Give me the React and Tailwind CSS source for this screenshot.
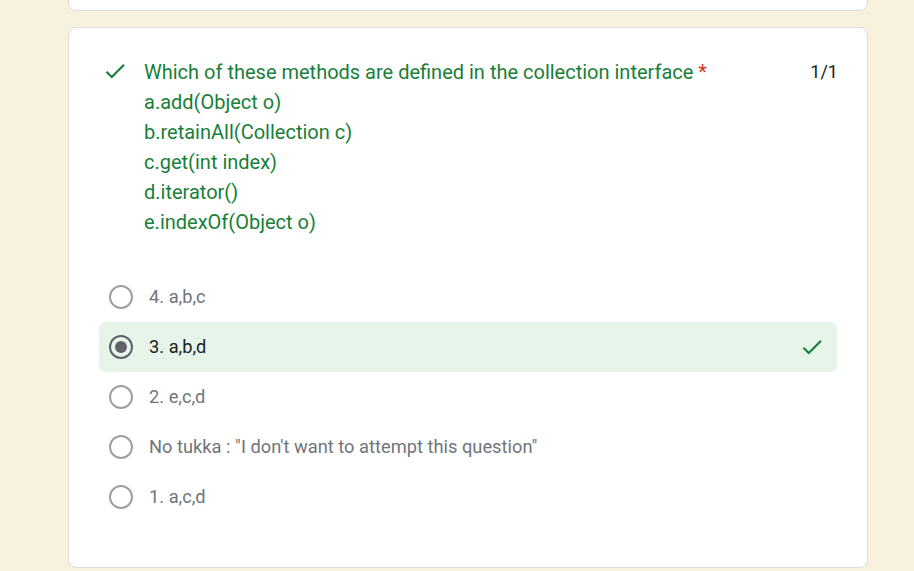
import React from "react";

function Check({ className }) {
  return (
    <svg viewBox="0 0 24 24" className={className} fill="currentColor">
      <path d="M9 16.17L4.83 12l-1.42 1.41L9 19 21 7l-1.41-1.41z" />
    </svg>
  );
}

function Radio({ selected }) {
  return (
    <div
      className={
        "w-[24px] h-[24px] rounded-full border-2 flex items-center justify-center shrink-0 " +
        (selected ? "border-[#5f6368]" : "border-[#9aa0a6]")
      }
    >
      {selected && <div className="w-[12px] h-[12px] rounded-full bg-[#5f6368]" />}
    </div>
  );
}

const options = [
  { label: "4. a,b,c" },
  { label: "3. a,b,d", selected: true },
  { label: "2. e,c,d" },
  { label: 'No tukka : "I don\'t want to attempt this question"' },
  { label: "1. a,c,d" },
];

export default function App() {
  return (
    <div
      className="w-[914px] h-[571px] overflow-hidden bg-[#f8f1dd] flex flex-col items-start"
      style={{ fontFamily: "Roboto, 'Liberation Sans', sans-serif" }}
    >
      <div className="ml-[68px] w-[800px] h-[11px] bg-white border border-t-0 border-[#dadce0] rounded-b-[8px]" />
      <div className="ml-[68px] mt-[16px] w-[800px] bg-white border border-[#dadce0] rounded-[8px] pt-[29px] pb-[45px] pl-[30px] pr-[30px]">
        <div className="flex items-start">
          <Check className="w-[26px] h-[26px] text-[#188038] mt-[1px] ml-[3px] shrink-0" />
          <div className="ml-[16px] flex-1 text-[20px] leading-[30px] text-[#188038]">
            <div>
              Which of these methods are defined in the collection interface{" "}
              <span className="text-[#d93025]">*</span>
            </div>
            <div>a.add(Object o)</div>
            <div>b.retainAll(Collection c)</div>
            <div>c.get(int index)</div>
            <div>d.iterator()</div>
            <div>e.indexOf(Object o)</div>
          </div>
          <div className="text-[18px] leading-[30px] text-[#202124] -mr-[1px]">1/1</div>
        </div>
        <div className="mt-[35px] flex flex-col">
          {options.map((o, i) => (
            <div
              key={i}
              className={
                "h-[50px] flex items-center pl-[10px] pr-[12px] rounded-[6px] " +
                (o.selected ? "bg-[#e6f4ea]" : "")
              }
            >
              <Radio selected={o.selected} />
              <span
                className={
                  "ml-[16px] text-[18.3px] " + (o.selected ? "text-[#202124]" : "text-[#70757a]")
                }
              >
                {o.label}
              </span>
              {o.selected && <Check className="ml-auto w-[26px] h-[26px] text-[#188038]" />}
            </div>
          ))}
        </div>
      </div>
    </div>
  );
}
